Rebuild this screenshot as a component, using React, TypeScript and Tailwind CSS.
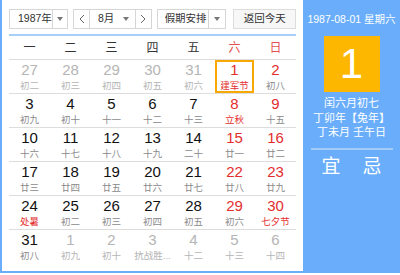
import React from "react";

type Day = { n: number; l: string; other?: boolean; fest?: boolean };

const rows: Day[][] = [
  [
    { n: 27, l: "初二", other: true },
    { n: 28, l: "初三", other: true },
    { n: 29, l: "初四", other: true },
    { n: 30, l: "初五", other: true },
    { n: 31, l: "初六", other: true },
    { n: 1, l: "建军节", fest: true },
    { n: 2, l: "初八" },
  ],
  [
    { n: 3, l: "初九" },
    { n: 4, l: "初十" },
    { n: 5, l: "十一" },
    { n: 6, l: "十二" },
    { n: 7, l: "十三" },
    { n: 8, l: "立秋", fest: true },
    { n: 9, l: "十五" },
  ],
  [
    { n: 10, l: "十六" },
    { n: 11, l: "十七" },
    { n: 12, l: "十八" },
    { n: 13, l: "十九" },
    { n: 14, l: "二十" },
    { n: 15, l: "廿一" },
    { n: 16, l: "廿二" },
  ],
  [
    { n: 17, l: "廿三" },
    { n: 18, l: "廿四" },
    { n: 19, l: "廿五" },
    { n: 20, l: "廿六" },
    { n: 21, l: "廿七" },
    { n: 22, l: "廿八" },
    { n: 23, l: "廿九" },
  ],
  [
    { n: 24, l: "处暑", fest: true },
    { n: 25, l: "初二" },
    { n: 26, l: "初三" },
    { n: 27, l: "初四" },
    { n: 28, l: "初五" },
    { n: 29, l: "初六" },
    { n: 30, l: "七夕节", fest: true },
  ],
  [
    { n: 31, l: "初八" },
    { n: 1, l: "初九", other: true },
    { n: 2, l: "初十", other: true },
    { n: 3, l: "抗战胜...", other: true },
    { n: 4, l: "十二", other: true },
    { n: 5, l: "十三", other: true },
    { n: 6, l: "十四", other: true },
  ],
];

const weekdays = ["一", "二", "三", "四", "五", "六", "日"];

function Caret() {
  return (
    <span className="w-0 h-0 border-x-[3px] border-x-transparent border-t-[4px] border-t-[#777]" />
  );
}

function Chevron({ dir }: { dir: "l" | "r" }) {
  return (
    <svg width="6" height="10" viewBox="0 0 6 10" fill="none" stroke="#666" strokeWidth={1}>
      <path d={dir === "l" ? "M5 1L1 5l4 4" : "M1 1l4 4-4 4"} />
    </svg>
  );
}

export default function App() {
  return (
    <div
      className="w-[400px] h-[275px] bg-white"
      style={{ fontFamily: '"Liberation Sans", "Noto Sans CJK SC", sans-serif' }}
    >
      <div className="flex h-[273px] border-l-2 border-b-2 border-[#6aaefb]">
        {/* left: calendar */}
        <div className="w-[301px] bg-white px-[7px] pt-[9px]">
          <div className="flex h-[20px] whitespace-nowrap text-[10.5px] text-[#333]">
            <div className="flex w-[59px] border border-[#d6d6d6]">
              <span className="flex flex-1 items-center pl-[8px]">1987年</span>
              <span className="flex w-[18px] items-center justify-center border-l border-[#d6d6d6]">
                <Caret />
              </span>
            </div>
            <div className="ml-[5px] flex w-[79px] border border-[#d6d6d6]">
              <span className="flex w-[16px] items-center justify-center border-r border-[#d6d6d6]">
                <Chevron dir="l" />
              </span>
              <span className="flex flex-1 items-center justify-between pl-[8px] pr-[6px]">
                8月
                <Caret />
              </span>
              <span className="flex w-[16px] items-center justify-center border-l border-[#d6d6d6]">
                <Chevron dir="r" />
              </span>
            </div>
            <div className="ml-[5px] flex w-[70px] border border-[#d6d6d6]">
              <span className="flex flex-1 items-center pl-[7px]">假期安排</span>
              <span className="flex w-[17px] items-center justify-center border-l border-[#d6d6d6]">
                <Caret />
              </span>
            </div>
            <div className="ml-[7px] flex w-[63px] items-center justify-center border border-[#dcdcdc] bg-[#f7f7f7]">
              返回今天
            </div>
          </div>

          <div className="mt-[5px] h-[2px] bg-[#a8cff6]" />

          <div className="grid h-[24px] grid-cols-7 border-b border-[#ddd] text-[12px]">
            {weekdays.map((w, i) => (
              <div
                key={w}
                className={`flex items-center justify-center ${i > 4 ? "text-[#e35050]" : "text-[#333]"}`}
              >
                {w}
              </div>
            ))}
          </div>

          {rows.map((row, ri) => (
            <div
              key={ri}
              className={`grid h-[34px] grid-cols-7 ${ri < rows.length - 1 ? "border-b border-[#ddd]" : ""}`}
            >
              {row.map((d, ci) => {
                const weekend = ci > 4;
                const numColor = d.other ? "text-[#b5b5b5]" : weekend ? "text-[#e42e2e]" : "text-[#111]";
                const lunColor = d.other ? "text-[#b5b5b5]" : d.fest ? "text-[#e42e2e]" : "text-[#8a8a8a]";
                const selected = ri === 0 && ci === 5;
                return (
                  <div key={ci} className="flex justify-center">
                    <div
                      className={`flex w-[39px] flex-col items-center ${
                        selected ? "h-[33px] border-2 border-[#f8a800] pt-0" : "pt-[2px]"
                      }`}
                    >
                      <span className={`text-[15px] leading-[16px] ${numColor}`}>{d.n}</span>
                      <span className={`mt-[2px] whitespace-nowrap text-[9.5px] leading-[12px] ${lunColor}`}>
                        {d.l}
                      </span>
                    </div>
                  </div>
                );
              })}
            </div>
          ))}
        </div>

        {/* right: today panel */}
        <div className="flex flex-1 flex-col items-center bg-[#6aaefb] text-white">
          <div className="mt-[12px] whitespace-nowrap text-[10.5px] leading-[14px]">1987-08-01 星期六</div>
          <div className="mt-[10px] flex h-[56px] w-[56px] items-center justify-center bg-[#feb700] text-[42px] leading-none">
            1
          </div>
          <div className="mt-[4px] flex flex-col items-center whitespace-nowrap text-[11px] leading-[14.5px]">
            <span>闰六月初七</span>
            <span>丁卯年【兔年】</span>
            <span>丁未月 壬午日</span>
          </div>
          <div className="mt-[8px] h-[2px] w-[82px] bg-[#a3ccfb]" />
          <div className="mt-[7px] flex w-[82px] justify-between px-[11px] text-[19px] leading-[20px]">
            <span>宜</span>
            <span>忌</span>
          </div>
        </div>
      </div>
    </div>
  );
}
